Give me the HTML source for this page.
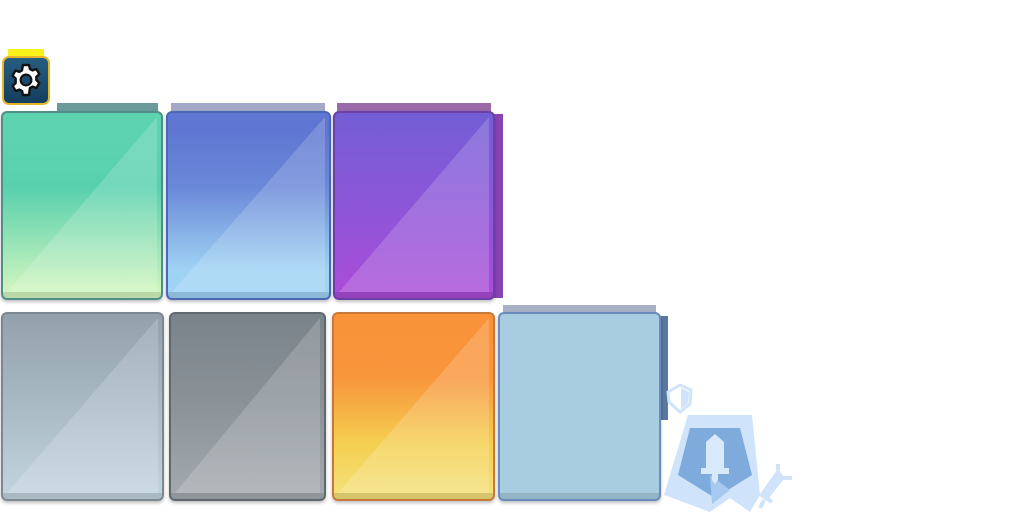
<!DOCTYPE html>
<html><head><style>
body{margin:0;width:1024px;height:512px;background:#fff;position:relative;overflow:hidden}
.a{position:absolute}
.c{position:absolute;border-radius:6px;box-sizing:border-box;border:2px solid;box-shadow:0 2px 3px rgba(0,0,0,.25);overflow:hidden}
.c::before{content:"";position:absolute;left:4px;right:4px;top:4px;bottom:6px;background:linear-gradient(to bottom right,transparent 50%,rgba(255,255,255,.17) 50%)}
.c.n::before{display:none}
.c::after{content:"";position:absolute;left:0;right:0;bottom:0;height:6px;background:rgba(0,0,0,.12)}
</style></head><body>
<div class="a" style="left:8px;top:49px;width:36px;height:8px;background:#f7f218"></div>
<div class="a" style="left:2px;top:56px;width:48px;height:49px;box-sizing:border-box;border:2px solid #e5b52a;border-radius:7px;background:linear-gradient(#275d80,#143e5e)"></div>
<svg class="a" style="left:8px;top:62px" width="36" height="36" viewBox="0 0 24 24"><path d="M10 2h4l.6 2.6 1.8 1 2.5-.9 2 3.4-2 1.8v2.2l2 1.8-2 3.4-2.5-.9-1.8 1L14 22h-4l-.6-2.6-1.8-1-2.5.9-2-3.4 2-1.8V11L3 9.1l2-3.4 2.5.9 1.8-1z" fill="#fff" stroke="#111" stroke-width="1.6" stroke-linejoin="round"/><circle cx="12" cy="12" r="3.6" fill="#1a4a6b" stroke="#111" stroke-width="1.4"/></svg>

<div class="a" style="left:57px;top:103px;width:101px;height:9px;background:#6a9a9a"></div>
<div class="a" style="left:171px;top:103px;width:154px;height:9px;background:#a3a9c6"></div>
<div class="a" style="left:337px;top:103px;width:154px;height:9px;background:#9b6aa8"></div>
<div class="a" style="left:490px;top:114px;width:13px;height:184px;background:#8a44b0"></div>

<div class="c" style="left:1px;top:111px;width:162px;height:189px;border-color:#4f8f88;background:linear-gradient(#5dd3b0 15%,#58d0ae 40%,#d7f7bf)"></div>
<div class="c" style="left:166px;top:111px;width:165px;height:189px;border-color:#4b68b8;background:linear-gradient(#5f77d2 10%,#6a88d8 40%,#9fd3f4 85%)"></div>
<div class="c" style="left:333px;top:111px;width:162px;height:189px;border-color:#6b3fa8;background:linear-gradient(#735ed6,#9254d8 60%,#ac4cd8)"></div>

<div class="a" style="left:503px;top:305px;width:153px;height:9px;background:#a9b1c4"></div>
<div class="a" style="left:659px;top:316px;width:9px;height:104px;background:#5a77a0"></div>

<div class="c" style="left:1px;top:312px;width:163px;height:189px;border-color:#7b8892;background:linear-gradient(#93a1ac,#a9bac5 50%,#c3d5df)"></div>
<div class="c" style="left:169px;top:312px;width:157px;height:189px;border-color:#61686d;background:linear-gradient(#7b838a,#8b9399 50%,#a4abb0)"></div>
<div class="c" style="left:332px;top:312px;width:163px;height:189px;border-color:#c8793a;background:linear-gradient(#f9933a 10%,#f8963c 35%,#f4cf50 70%,#f3e27c)"></div>
<div class="c n" style="left:498px;top:312px;width:163px;height:189px;border-color:#6a8bbc;background:#a8cde0"></div>

<svg class="a" style="left:660px;top:380px" width="140" height="132" viewBox="0 0 140 132">
<path d="M8 12 L20 5 L31 10 L30 24 L20 32 L9 22 Z" fill="none" stroke="#cfe3fb" stroke-width="3"/>
<path d="M21 8 L29 12 L28 23 L21 29 Z" fill="#cfe3fb"/>
<path d="M28 35 H92 L100 115 L90 132 L70 118 L50 132 L4 115 Z" fill="#cfe3fb"/>
<path d="M30 48 H80 L92 95 L55 118 L18 95 Z" fill="#7eabdc"/>
<path d="M50 95 L52 124 L70 110 Z" fill="#a8c9ef"/>
<path d="M46 62 L55 54 L64 62 V88 H46 Z M41 88 H69 V94 H41 Z M52 94 H58 V100 L55 104 L52 100 Z" fill="#d8e9fb"/>
<path d="M118 92 L104 112 L108 116 L122 98 Z M100 114 L112 122 M104 120 L100 128 M118 90 V84 M120 98 H132" stroke="#cfe3fb" stroke-width="4" fill="#cfe3fb"/>
</svg>
</body></html>
